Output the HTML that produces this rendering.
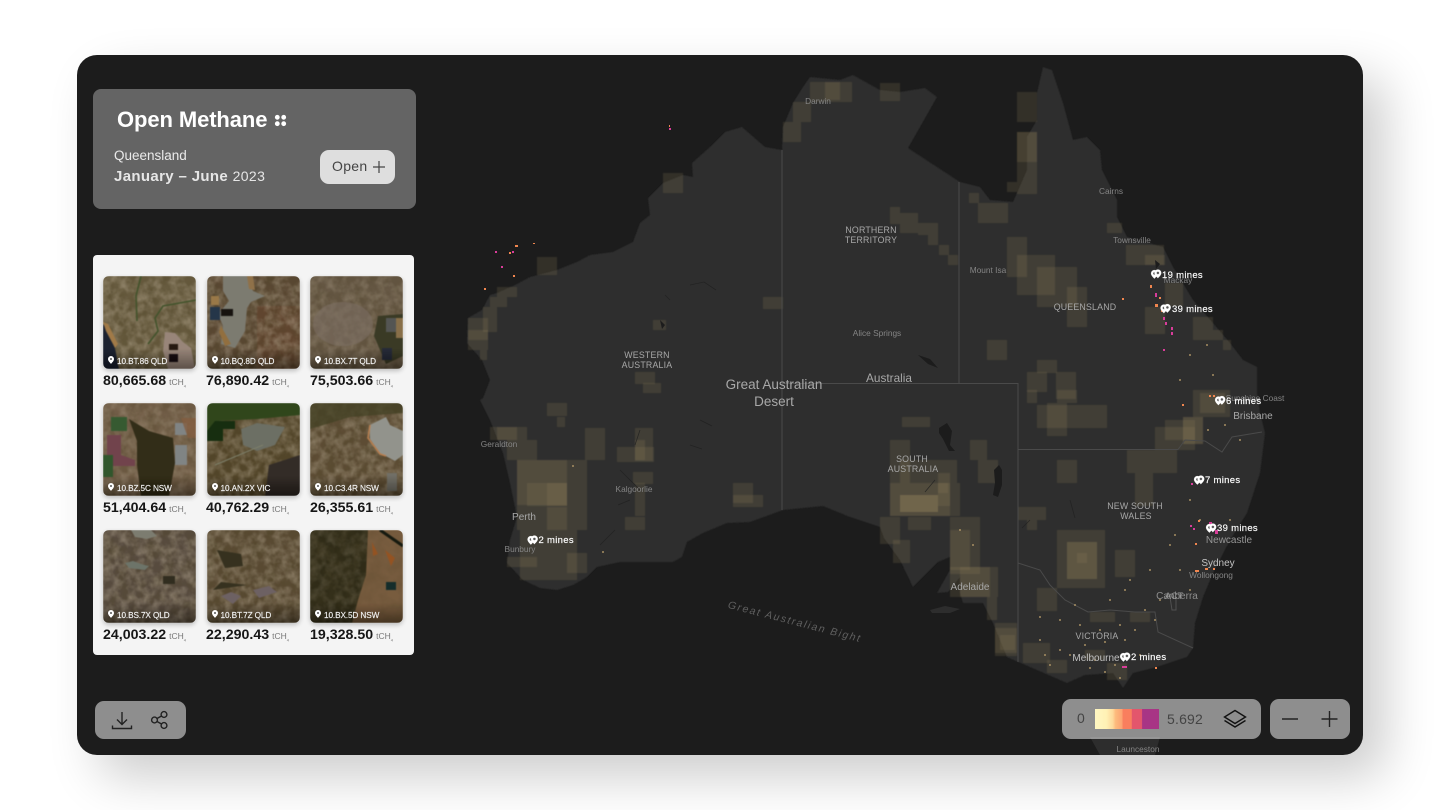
<!DOCTYPE html>
<html><head><meta charset="utf-8"><style>
*{box-sizing:border-box}
html,body{margin:0;padding:0;width:1440px;height:810px;overflow:hidden;background:#fff;font-family:"Liberation Sans",sans-serif}
#card{position:absolute;left:77px;top:55px;width:1286px;height:700px;border-radius:20px;background:#1c1c1c;box-shadow:22px 22px 50px rgba(0,0,0,.2);overflow:hidden}
#map{position:absolute;left:0;top:0}
.abs{position:absolute}
.t{position:absolute;border-radius:6px;width:93px;height:93px;overflow:hidden;box-shadow:0 2px 5px rgba(0,0,0,.22)}
.t svg.im{display:block;filter:blur(.45px) brightness(.8) contrast(1.15) saturate(1.1)}
.t span{position:absolute;left:14px;bottom:3.500px;font-size:8.200px;color:#f2f2f2;white-space:nowrap;letter-spacing:-.1px;-webkit-text-stroke:.15px #f2f2f2}
.t i{position:absolute;left:5px;bottom:5px;width:6px;height:8px}
.t i svg{display:block}
.v{position:absolute;font-size:14.200px;font-weight:bold;color:#161616;white-space:nowrap}
.v small{font-size:8.500px;font-weight:normal;color:#777;margin-left:3px}
.v small sub{font-size:4px}
.panel{position:absolute;background:rgba(255,255,255,.5);border-radius:9px}
</style></head><body>
<div id="card"></div>
<svg id="map" class="abs" width="1440" height="810" viewBox="0 0 1440 810" style="left:0;top:0">
<defs><clipPath id="cc"><rect x="77" y="55" width="1286" height="700" rx="20"/></clipPath>
<filter id="b1" x="-5%" y="-5%" width="110%" height="110%"><feGaussianBlur stdDeviation=".6"/></filter>
<g id="pin"><path d="M3.400 0a3.400 3.400 0 0 1 3.400 3.400c0 2.200-2.200 3.900-3.400 5.300C2.200 7.300 0 5.600 0 3.400a3.400 3.400 0 0 1 3.400-3.400z" fill="#fff"/><circle cx="3.400" cy="3.400" r="1.300" fill="#555"/></g></defs>
<g clip-path="url(#cc)">
<path fill="#2d2d2d" filter="url(#b1)" d="M782 150L765 147L742 127L725 132L710 147L692 163L693 177L683 175L663 183L648 198L650 215L640 223L633 242L613 252L590 255L577 262L557 270L530 277L515 285L497 293L490 295L482 310L468 318L467 343L482 360L490 380L483 398L480 400L490 420L503 453L510 483L517 517L510 540L507 563L523 580L540 588L557 590L573 585L587 577L597 567L620 562L673 562L682 557L687 542L703 533L727 523L750 522L783 510L823 506L850 517L880 527L884 538L900 560L913 587L923 577L938 562L950 557L950 570L937 593L948 592L960 577L960 593L963 603L983 603L993 623L1007 657L1037 670L1067 683L1085 675L1113 673L1123 688L1133 673L1157 667L1187 657L1193 648L1195 623L1203 597L1213 573L1230 540L1247 513L1260 473L1265 433L1260 413L1257 393L1257 367L1243 360L1230 343L1213 323L1193 300L1173 267L1163 247L1127 237L1117 217L1117 200L1102 170L1100 150L1087 137L1073 140L1063 103L1052 70L1043 67L1037 93L1037 120L1027 137L1027 170L1017 193L1013 202L990 200L980 187L960 182L937 167L908 148L920 127L937 97L925 88L900 92L880 90L853 75L840 80L810 77L803 87L793 103L783 127Z"/>
<path fill="#2d2d2d" d="M1090 737L1160 737L1155 755L1100 755Z M930 610L945 606L960 609L950 613L932 613Z"/>
<g fill="#8f8258" fill-opacity=".2" filter="url(#b1)">
<rect x="810" y="82" width="42" height="20"/><rect x="825" y="82" width="15" height="18"/><rect x="793" y="102" width="18" height="20"/><rect x="783" y="122" width="18" height="20"/>
<rect x="663" y="173" width="20" height="20"/><rect x="537" y="257" width="20" height="18"/><rect x="497" y="287" width="20" height="10"/><rect x="490" y="297" width="17" height="10"/><rect x="483" y="307" width="14" height="25"/><rect x="468" y="318" width="20" height="32"/><rect x="468" y="330" width="20" height="10"/><rect x="480" y="350" width="7" height="10"/>
<rect x="763" y="297" width="20" height="12"/><rect x="653" y="320" width="13" height="10"/><rect x="635" y="372" width="20" height="12"/><rect x="643" y="383" width="18" height="10"/>
<rect x="547" y="403" width="20" height="13"/><rect x="557" y="417" width="8" height="10"/><rect x="490" y="427" width="37" height="13"/><rect x="507" y="440" width="30" height="20"/><rect x="497" y="427" width="20" height="13"/>
<rect x="517" y="460" width="70" height="70"/><rect x="517" y="460" width="50" height="45"/><rect x="527" y="483" width="40" height="23"/><rect x="547" y="507" width="20" height="23"/><rect x="547" y="483" width="20" height="23"/><rect x="520" y="530" width="57" height="50"/><rect x="507" y="557" width="30" height="10"/><rect x="567" y="553" width="20" height="20"/>
<rect x="585" y="428" width="20" height="32"/><rect x="617" y="447" width="37" height="15"/><rect x="635" y="428" width="18" height="33"/><rect x="635" y="440" width="10" height="20"/><rect x="633" y="472" width="20" height="12"/><rect x="635" y="483" width="10" height="33"/><rect x="625" y="517" width="20" height="13"/>
<rect x="733" y="483" width="20" height="20"/><rect x="733" y="495" width="30" height="12"/>
<rect x="890" y="440" width="20" height="43"/><rect x="890" y="483" width="70" height="33"/><rect x="890" y="483" width="60" height="33"/><rect x="900" y="495" width="38" height="17"/><rect x="900" y="495" width="38" height="17"/><rect x="900" y="495" width="38" height="17"/><rect x="938" y="473" width="12" height="33"/><rect x="938" y="483" width="10" height="10"/><rect x="900" y="460" width="57" height="23"/><rect x="902" y="417" width="28" height="10"/><rect x="970" y="440" width="17" height="20"/><rect x="978" y="460" width="20" height="23"/><rect x="880" y="517" width="20" height="27"/><rect x="893" y="540" width="17" height="23"/><rect x="908" y="517" width="23" height="13"/><rect x="950" y="517" width="30" height="57"/><rect x="950" y="530" width="20" height="40"/><rect x="950" y="567" width="48" height="30"/><rect x="960" y="567" width="30" height="30"/><rect x="987" y="597" width="10" height="23"/><rect x="995" y="623" width="22" height="33"/><rect x="995" y="628" width="22" height="25"/><rect x="1000" y="635" width="15" height="15"/>
<rect x="1037" y="405" width="70" height="23"/><rect x="1047" y="403" width="20" height="33"/><rect x="1057" y="390" width="20" height="13"/><rect x="1027" y="390" width="10" height="13"/>
<rect x="1057" y="460" width="20" height="23"/><rect x="1018" y="507" width="28" height="13"/><rect x="1027" y="520" width="10" height="10"/><rect x="1057" y="530" width="48" height="58"/><rect x="1067" y="542" width="30" height="37"/><rect x="1067" y="542" width="30" height="37"/><rect x="1077" y="553" width="10" height="10"/><rect x="1037" y="588" width="20" height="23"/><rect x="1115" y="550" width="20" height="27"/>
<rect x="1127" y="450" width="50" height="23"/><rect x="1155" y="427" width="40" height="23"/><rect x="1183" y="417" width="20" height="27"/><rect x="1183" y="417" width="20" height="27"/><rect x="1135" y="473" width="18" height="33"/><rect x="1193" y="390" width="37" height="27"/><rect x="1200" y="393" width="25" height="20"/>
<rect x="1023" y="643" width="27" height="20"/><rect x="1047" y="660" width="20" height="13"/><rect x="1107" y="663" width="20" height="17"/><rect x="1085" y="650" width="20" height="10"/><rect x="1090" y="612" width="25" height="10"/><rect x="1130" y="612" width="20" height="10"/>
<rect x="880" y="83" width="20" height="18"/><rect x="1017" y="92" width="20" height="30"/><rect x="1017" y="132" width="20" height="30"/><rect x="1017" y="132" width="20" height="30"/><rect x="1017" y="162" width="20" height="32"/><rect x="1007" y="182" width="10" height="10"/>
<rect x="969" y="193" width="10" height="10"/><rect x="978" y="203" width="30" height="20"/><rect x="890" y="207" width="10" height="17"/><rect x="900" y="213" width="18" height="20"/><rect x="918" y="223" width="20" height="12"/><rect x="928" y="235" width="10" height="10"/><rect x="939" y="245" width="10" height="10"/><rect x="948" y="255" width="10" height="10"/>
<rect x="1007" y="237" width="20" height="40"/><rect x="1017" y="255" width="38" height="40"/><rect x="1037" y="267" width="40" height="40"/><rect x="1067" y="287" width="20" height="40"/>
<rect x="987" y="340" width="20" height="20"/><rect x="1037" y="360" width="20" height="13"/><rect x="1027" y="372" width="20" height="20"/><rect x="1056" y="372" width="20" height="27"/>
<rect x="1107" y="223" width="15" height="10"/><rect x="1126" y="245" width="38" height="20"/><rect x="1145" y="255" width="20" height="10"/><rect x="1165" y="283" width="18" height="23"/><rect x="1145" y="307" width="20" height="27"/><rect x="1193" y="317" width="20" height="23"/><rect x="1213" y="330" width="10" height="10"/><rect x="1223" y="340" width="8" height="10"/><rect x="1165" y="420" width="30" height="20"/>
</g>
<g fill="none" stroke="#4a4a4a" stroke-width="1"><path d="M782 150V510M782 383.500H1018M959 182V383M1018 383V662M1018 449.500H1178L1185 440L1205 441L1222 452L1232 437L1262 432M1018 563L1040 570L1050 585L1065 600L1088 612L1110 610L1135 612L1155 612L1158 632L1193 648"/></g>
<path fill="none" stroke="#505050" d="M1170 597L1172 610L1176 610L1176 597Z"/>
<g fill="#1c1c1c"><path d="M939 428l8-5 5 8-2 14 5 6-6 0-6-12-4-6z M994 470l5-5 3 5 0 15-4 12-5-2 2-12z M1155 260l5 4-4 5z M918 355l12 4 8 9-10-4z M660 320l5 5-3 4z"/></g>
<g fill="none" stroke="#202020" stroke-width=".8" opacity=".8"><path d="M690 285l14-3 12 8M665 295l5 5M640 430l-5 15M620 470l20 20M600 545l15-15M630 500l-12 5M700 420l12 6M690 445l12 4M935 480l-10 12M1070 500l5 18M1030 520l-8 8"/></g>
<g fill="#a68e62"><circle cx="1100" cy="630" r="1"/><circle cx="1040" cy="640" r="1"/><circle cx="1060" cy="620" r="1"/><circle cx="1110" cy="600" r="1"/><circle cx="1130" cy="580" r="1"/><circle cx="1150" cy="570" r="1"/><circle cx="1170" cy="545" r="1"/><circle cx="1120" cy="625" r="1"/><circle cx="1135" cy="630" r="1"/><circle cx="1085" cy="645" r="1"/><circle cx="1070" cy="655" r="1"/><circle cx="1095" cy="660" r="1"/><circle cx="1115" cy="665" r="1"/><circle cx="1050" cy="665" r="1"/><circle cx="1160" cy="600" r="1"/><circle cx="1180" cy="570" r="1"/><circle cx="1200" cy="520" r="1"/><circle cx="1190" cy="500" r="1"/><circle cx="1155" cy="620" r="1"/><circle cx="1040" cy="617" r="1"/><circle cx="1075" cy="605" r="1"/><circle cx="1208" cy="430" r="1"/><circle cx="1225" cy="425" r="1"/><circle cx="1240" cy="440" r="1"/><circle cx="1180" cy="380" r="1"/><circle cx="1190" cy="355" r="1"/><circle cx="1207" cy="345" r="1"/><circle cx="1213" cy="375" r="1"/><circle cx="973" cy="545" r="1"/><circle cx="960" cy="530" r="1"/><circle cx="603" cy="552" r="1"/><circle cx="573" cy="466" r="1"/><circle cx="1080" cy="625" r="1"/><circle cx="1105" cy="642" r="1"/><circle cx="1140" cy="655" r="1"/><circle cx="1125" cy="640" r="1"/><circle cx="1060" cy="650" r="1"/><circle cx="1045" cy="655" r="1"/><circle cx="1090" cy="668" r="1"/><circle cx="1105" cy="672" r="1"/><circle cx="1120" cy="678" r="1"/><circle cx="1145" cy="610" r="1"/><circle cx="1125" cy="590" r="1"/><circle cx="1190" cy="590" r="1"/><circle cx="1175" cy="535" r="1"/><circle cx="1230" cy="520" r="1"/></g>
<g fill="#f0864f"><rect x="1122" y="298" width="2" height="2"/><rect x="1150" y="285" width="2" height="3"/><rect x="1155" y="304" width="3" height="3"/><rect x="1159" y="297" width="2" height="2"/><rect x="1161" y="310" width="2" height="2"/><rect x="1195" y="570" width="4" height="2"/><rect x="1205" y="568" width="3" height="2"/><rect x="1213" y="568" width="2" height="2"/><rect x="1195" y="543" width="2" height="2"/><rect x="1155" y="667" width="2" height="2"/><rect x="1182" y="404" width="2" height="2"/><rect x="1213" y="395" width="2" height="2"/><rect x="1198" y="520" width="2" height="2"/><rect x="1209" y="395" width="2" height="2"/><rect x="515" y="245" width="3" height="2"/><rect x="509" y="252" width="2" height="2"/><rect x="533" y="243" width="2" height="1"/><rect x="484" y="288" width="2" height="2"/><rect x="513" y="275" width="2" height="2"/><rect x="669" y="125" width="1" height="2"/></g>
<g fill="#d93d9a"><rect x="1155" y="293" width="2" height="4"/><rect x="1163" y="317" width="2" height="3"/><rect x="1165" y="322" width="2" height="3"/><rect x="1171" y="327" width="2" height="3"/><rect x="1171" y="332" width="2" height="3"/><rect x="1163" y="349" width="2" height="2"/><rect x="1190" y="525" width="2" height="2"/><rect x="1193" y="528" width="2" height="2"/><rect x="1191" y="483" width="2" height="2"/><rect x="1209" y="522" width="3" height="2"/><rect x="1215" y="530" width="3" height="4"/><rect x="1122" y="666" width="5" height="2"/><rect x="669" y="128" width="2" height="2"/><rect x="501" y="266" width="2" height="2"/><rect x="495" y="251" width="2" height="2"/><rect x="512" y="251" width="2" height="2"/></g>
<g fill="#a8a8a8" text-anchor="middle" font-family="Liberation Sans, sans-serif">
<g font-size="8.300" fill="#858585"><text x="818" y="104">Darwin</text><text x="877" y="336">Alice Springs</text><text x="988" y="273">Mount Isa</text><text x="1111" y="194">Cairns</text><text x="1132" y="243">Townsville</text><text x="1178" y="283">Mackay</text><text x="1255" y="401">Sunshine Coast</text><text x="499" y="447">Geraldton</text><text x="634" y="492">Kalgoorlie</text><text x="520" y="552">Bunbury</text><text x="1211" y="578">Wollongong</text><text x="1138" y="752">Launceston</text></g>
<g font-size="8.800" letter-spacing=".2"><text x="871" y="233">NORTHERN</text><text x="871" y="243">TERRITORY</text><text x="647" y="358">WESTERN</text><text x="647" y="368">AUSTRALIA</text><text x="1085" y="310">QUEENSLAND</text><text x="912" y="462">SOUTH</text><text x="913" y="472">AUSTRALIA</text><text x="1135" y="509">NEW SOUTH</text><text x="1136" y="519">WALES</text><text x="1097" y="639">VICTORIA</text></g>
<g font-size="13.500"><text x="774" y="389">Great Australian</text><text x="774" y="406">Desert</text></g>
<text x="889" y="382" font-size="11.800">Australia</text>
<g font-size="10"><text x="1253" y="419">Brisbane</text><text x="524" y="520">Perth</text><text x="1229" y="543" fill="#969696">Newcastle</text><text x="1218" y="566" fill="#c4c4c4">Sydney</text><text x="1177" y="599" fill="#8e8e8e">Canberra</text><text x="1174" y="599" fill="#9a9a9a" font-size="9">ACT</text><text x="970" y="590">Adelaide</text><text x="1096" y="661" fill="#c0c0c0">Melbourne</text></g>
<text transform="translate(794 625) rotate(14.500)" font-size="10.500" letter-spacing="1.600" font-style="italic" fill="#5f5f5f">Great Australian Bight</text>
</g>
<g fill="#fff" font-size="9.500" font-family="Liberation Sans, sans-serif" letter-spacing=".3" stroke="#fff" stroke-width=".15">
<use href="#pin" x="1151" y="270"/><use href="#pin" x="1154.500" y="269.500"/><text x="1162" y="278">19 mines</text>
<use href="#pin" x="1160.500" y="304.500"/><use href="#pin" x="1164" y="304"/><text x="1172" y="312">39 mines</text>
<use href="#pin" x="1215" y="396.500"/><use href="#pin" x="1218.500" y="396"/><text x="1226" y="404">6 mines</text>
<use href="#pin" x="1194" y="476"/><use href="#pin" x="1197.500" y="475.500"/><text x="1205" y="483">7 mines</text>
<use href="#pin" x="1206" y="524"/><use href="#pin" x="1209.500" y="523.500"/><text x="1217" y="531">39 mines</text>
<use href="#pin" x="1120" y="653"/><use href="#pin" x="1123.500" y="652.500"/><text x="1131" y="660">2 mines</text>
<use href="#pin" x="527.500" y="536"/><use href="#pin" x="531" y="535.500"/><text x="538.500" y="543">2 mines</text>
</g>
</g>
</svg>

<div class="abs" style="left:93px;top:89px;width:323px;height:120px;background:#646464;border-radius:8px"></div>
<div class="abs" style="left:117px;top:107px;font-size:22px;font-weight:bold;color:#fff;white-space:nowrap;letter-spacing:-.1px">Open Methane</div>
<svg class="abs" style="left:274px;top:114px" width="13" height="13" viewBox="0 0 13 13" fill="#fff"><circle cx="3.300" cy="3.300" r="2.400"/><circle cx="9.700" cy="3.300" r="2.400"/><circle cx="3.300" cy="9.700" r="2.400"/><circle cx="9.700" cy="9.700" r="2.400"/></svg>
<div class="abs" style="left:114px;top:148px;font-size:13.500px;color:#eaeaea;white-space:nowrap">Queensland</div>
<div class="abs" style="left:114px;top:168px;font-size:15px;color:#e6e6e6;white-space:nowrap;letter-spacing:.35px"><b>January – June</b> <span style="font-size:14px">2023</span></div>
<div class="abs" style="left:320px;top:150px;width:75px;height:34px;background:#dedede;border-radius:9px"></div>
<div class="abs" style="left:332px;top:158px;font-size:14px;color:#444;white-space:nowrap;letter-spacing:.3px">Open</div>
<svg class="abs" style="left:372px;top:160px" width="14" height="14" fill="none" stroke="#444" stroke-width="1.200"><path d="M7 1v12M1 7h12"/></svg>

<div class="abs" style="left:93px;top:255px;width:321px;height:400px;background:#f4f4f4;border-radius:4px"></div>
<svg width="0" height="0" style="position:absolute"><defs>
<filter id="n1" x="0" y="0" width="100%" height="100%"><feTurbulence type="fractalNoise" baseFrequency=".07" numOctaves="4" seed="3"/><feColorMatrix values="0 0 0 0 .15 0 0 0 0 .12 0 0 0 0 .06 .9 0 0 0 -.3"/></filter>
<filter id="n2" x="0" y="0" width="100%" height="100%"><feTurbulence type="fractalNoise" baseFrequency=".12" numOctaves="4" seed="8"/><feColorMatrix values="0 0 0 0 .8 0 0 0 0 .7 0 0 0 0 .55 0 .9 0 0 -.32"/></filter>
<linearGradient id="gb" x1="0" y1="0" x2="0" y2="1"><stop offset=".78" stop-color="#000" stop-opacity="0"/><stop offset="1" stop-color="#000" stop-opacity=".35"/></linearGradient>
<path id="lp" d="M3 0a3 3 0 0 1 3 3c0 2-2 3.500-3 5C2 6.500 0 5 0 3a3 3 0 0 1 3-3z"/>
</defs></svg>

<div class="t" style="left:103px;top:276px"><svg class="im" width="93" height="93"><rect width="93" height="93" fill="#84785c"/><rect width="93" height="93" filter="url(#n1)"/><rect width="93" height="93" filter="url(#n2)"/><path d="M0 48L10 62L16 93H0Z" fill="#343a48"/><path d="M0 46L5 48L15 68L12 72L3 55Z" fill="#c09a68"/><path d="M62 56L72 57L80 66L88 72L92 93H65L60 75Z" fill="#b8a69a"/><rect x="66" y="68" width="9" height="6" fill="#3d3028"/><rect x="66" y="78" width="9" height="8" fill="#30262a"/><path d="M38 0L33 20L34 45M93 24L60 30L52 42L55 55L45 68" stroke="#5f6f48" stroke-width="1.600" fill="none"/><rect width="93" height="93" fill="url(#gb)"/></svg><i><svg width="6" height="8"><use href="#lp" fill="#fff"/><circle cx="3" cy="3" r="1" fill="#555"/></svg></i><span>10.BT.86 QLD</span></div>
<div class="t" style="left:206.500px;top:276px"><svg class="im" width="93" height="93"><rect width="93" height="93" fill="#74624d"/><rect x="50" y="30" width="43" height="63" fill="#7f5f48" opacity=".7"/><rect width="93" height="93" filter="url(#n1)"/><rect width="93" height="93" filter="url(#n2)"/><path d="M16 0H40L46 15L58 20L44 26L40 32L38 55L28 72L14 68L16 50L11 38L22 25L16 15Z" fill="#9b9a90"/><rect x="3" y="31" width="10" height="13" fill="#3e4f62"/><path d="M4 20h8v9H4z" fill="#b89868"/><rect x="14" y="33" width="12" height="7" fill="#2d2a26"/><path d="M14 50l10 18-6 2-6-14z" fill="#b08e5e"/><path d="M40 0h6l2 14-6-1z" fill="#ae9068"/><rect width="93" height="93" fill="url(#gb)"/></svg><i><svg width="6" height="8"><use href="#lp" fill="#fff"/><circle cx="3" cy="3" r="1" fill="#555"/></svg></i><span>10.BQ.8D QLD</span></div>
<div class="t" style="left:310px;top:276px"><svg class="im" width="93" height="93"><rect width="93" height="93" fill="#80725f"/><rect width="93" height="93" filter="url(#n1)" opacity=".6"/><rect width="93" height="93" filter="url(#n2)" opacity=".7"/><ellipse cx="33" cy="48" rx="30" ry="22" fill="#9b8e82" opacity=".6"/><path d="M68 40L93 38V80L76 88L64 60Z" fill="#54543f"/><rect x="76" y="42" width="14" height="14" fill="#70716f"/><path d="M86 42h7v20h-7z" fill="#a68e68"/><rect x="72" y="72" width="10" height="12" fill="#3f4350"/><rect width="93" height="93" fill="url(#gb)"/></svg><i><svg width="6" height="8"><use href="#lp" fill="#fff"/><circle cx="3" cy="3" r="1" fill="#555"/></svg></i><span>10.BX.7T QLD</span></div>

<div class="t" style="left:103px;top:403px"><svg class="im" width="93" height="93"><rect width="93" height="93" fill="#8e7a64"/><rect width="93" height="93" filter="url(#n1)" opacity=".8"/><rect width="93" height="93" filter="url(#n2)" opacity=".7"/><path d="M26 16L46 28L70 35L72 60L66 93H38L34 62L34 38Z" fill="#4b4631"/><path d="M8 14h16v14H8z" fill="#52764d"/><path d="M4 32h14v20l14 5v6H4z" fill="#8c5f68"/><path d="M0 52h10v22H0z" fill="#4d7148"/><path d="M72 20h12v12h-12zM72 42h12v20H72z" fill="#a0a4a4"/><path d="M78 15h15v20h-8z" fill="#a07a5e" opacity=".8"/><rect width="93" height="93" fill="url(#gb)"/></svg><i><svg width="6" height="8"><use href="#lp" fill="#fff"/><circle cx="3" cy="3" r="1" fill="#555"/></svg></i><span>10.BZ.5C NSW</span></div>
<div class="t" style="left:206.500px;top:403px"><svg class="im" width="93" height="93"><rect width="93" height="93" fill="#6d6044"/><rect width="93" height="93" filter="url(#n1)"/><rect width="93" height="93" filter="url(#n2)"/><path d="M0 0H93V12L50 16L10 18L0 30Z" fill="#4a6036"/><path d="M8 18h20v8H16v12H0V28z" fill="#2f4628"/><path d="M34 26L50 20L78 24L68 42L50 48L36 42Z" fill="#8a8d82"/><path d="M62 62L93 52V93H58Z" fill="#4c4540"/><path d="M8 62L56 42" stroke="#9d9f8a" fill="none"/><rect width="93" height="93" fill="url(#gb)"/></svg><i><svg width="6" height="8"><use href="#lp" fill="#fff"/><circle cx="3" cy="3" r="1" fill="#555"/></svg></i><span>10.AN.2X VIC</span></div>
<div class="t" style="left:310px;top:403px"><svg class="im" width="93" height="93"><rect width="93" height="93" fill="#786850"/><rect width="93" height="93" filter="url(#n1)"/><rect width="93" height="93" filter="url(#n2)"/><path d="M0 0H93V10L40 14L0 26Z" fill="#5f5c40" opacity=".8"/><path d="M60 22L76 14L80 22L93 28V52L85 58L70 50L60 36Z" fill="#b4b5ae"/><path d="M60 22L58 35L70 51L76 53" stroke="#d89f70" stroke-width="1.500" fill="none"/><path d="M77 70h10v18H77z" fill="#8f8d84"/><rect width="93" height="93" fill="url(#gb)"/></svg><i><svg width="6" height="8"><use href="#lp" fill="#fff"/><circle cx="3" cy="3" r="1" fill="#555"/></svg></i><span>10.C3.4R NSW</span></div>

<div class="t" style="left:103px;top:530px"><svg class="im" width="93" height="93"><rect width="93" height="93" fill="#72665a"/><rect width="93" height="93" filter="url(#n1)"/><rect width="93" height="93" filter="url(#n2)"/><path d="M28 0h20l6 6-10 3-12-2z" fill="#9c9c90"/><path d="M22 33l8-2 8 3 8 2-4 4-16-2z" fill="#8c9388"/><rect x="60" y="46" width="12" height="8" fill="#4a4638"/><rect width="93" height="93" fill="url(#gb)"/></svg><i><svg width="6" height="8"><use href="#lp" fill="#fff"/><circle cx="3" cy="3" r="1" fill="#555"/></svg></i><span>10.BS.7X QLD</span></div>
<div class="t" style="left:206.500px;top:530px"><svg class="im" width="93" height="93"><rect width="93" height="93" fill="#74654e"/><rect width="93" height="93" filter="url(#n1)"/><rect width="93" height="93" filter="url(#n2)"/><path d="M14 66L24 62L34 66L26 74Z M46 60L62 56L70 62L52 68Z" fill="#8a7e80"/><path d="M10 20L34 24L36 36L18 38Z M40 55L14 52L6 60Z" fill="#4f4a38"/><rect width="93" height="93" fill="url(#gb)"/></svg><i><svg width="6" height="8"><use href="#lp" fill="#fff"/><circle cx="3" cy="3" r="1" fill="#555"/></svg></i><span>10.BT.7Z QLD</span></div>
<div class="t" style="left:310px;top:530px"><svg class="im" width="93" height="93"><rect width="93" height="93" fill="#484430"/><rect width="93" height="93" filter="url(#n2)" opacity=".5"/><path d="M58 0H93V93H42L48 70L56 45Z" fill="#95795c"/><rect width="93" height="93" filter="url(#n1)" opacity=".6"/><path d="M70 0L93 16" stroke="#2c3026" stroke-width="3"/><path d="M75 20l10 8-4 8zM62 12l6 12-5 2z" fill="#b07040"/><rect x="76" y="52" width="10" height="8" fill="#2d4543"/><rect width="93" height="93" fill="url(#gb)"/></svg><i><svg width="6" height="8"><use href="#lp" fill="#fff"/><circle cx="3" cy="3" r="1" fill="#555"/></svg></i><span>10.BX.5D NSW</span></div>

<div class="v" style="left:103px;top:373px">80,665.68<small>tCH<sub>4</sub></small></div>
<div class="v" style="left:206px;top:373px">76,890.42<small>tCH<sub>4</sub></small></div>
<div class="v" style="left:310px;top:373px">75,503.66<small>tCH<sub>4</sub></small></div>
<div class="v" style="left:103px;top:500px">51,404.64<small>tCH<sub>4</sub></small></div>
<div class="v" style="left:206px;top:500px">40,762.29<small>tCH<sub>4</sub></small></div>
<div class="v" style="left:310px;top:500px">26,355.61<small>tCH<sub>4</sub></small></div>
<div class="v" style="left:103px;top:627px">24,003.22<small>tCH<sub>4</sub></small></div>
<div class="v" style="left:206px;top:627px">22,290.43<small>tCH<sub>4</sub></small></div>
<div class="v" style="left:310px;top:627px">19,328.50<small>tCH<sub>4</sub></small></div>

<div class="panel" style="left:95px;top:701px;width:91px;height:38px"></div>
<svg class="abs" style="left:110px;top:710px" width="24" height="22" fill="none" stroke="#222" stroke-width="1.400"><path d="M12 2V14M7 9.500L12 14.500L17 9.500M2.500 15.500V18.500H21.500V15.500"/></svg>
<svg class="abs" style="left:150px;top:710px" width="20" height="20" fill="none" stroke="#222" stroke-width="1.400"><circle cx="4.500" cy="10" r="2.900"/><circle cx="14" cy="4.500" r="2.900"/><circle cx="14" cy="15.500" r="2.900"/><path d="M7 8.500L11.500 6M7 11.500L11.500 14"/></svg>

<div class="panel" style="left:1062px;top:699px;width:199px;height:40px"></div>
<div class="abs" style="left:1077px;top:710px;font-size:14px;color:#444">0</div>
<div class="abs" style="left:1095px;top:709px;width:64px;height:20px;background:linear-gradient(90deg,#fff7c2 0,#fff1b5 18%,#fed89a 28%,#fdbb7d 32%,#fca371 42%,#f97e5e 44%,#f97e5e 57%,#e3566c 58%,#e3566c 73%,#a83585 74%,#a83585 100%)"></div>
<div class="abs" style="left:1167px;top:711px;font-size:14px;color:#444;letter-spacing:.2px">5.692</div>
<svg class="abs" style="left:1223px;top:709px" width="24" height="20" fill="none" stroke="#111" stroke-width="1.400"><path d="M12 1.500L22.500 8L12 14.500L1.500 8Z"/><path d="M1.500 11.500L12 18L22.500 11.500"/></svg>

<div class="panel" style="left:1270px;top:699px;width:80px;height:40px"></div>
<svg class="abs" style="left:1280px;top:709px" width="60" height="20" fill="none" stroke="#222" stroke-width="1.400"><path d="M2 10H18M41.500 10H57.500M49.500 2V18"/></svg>
</body></html>
